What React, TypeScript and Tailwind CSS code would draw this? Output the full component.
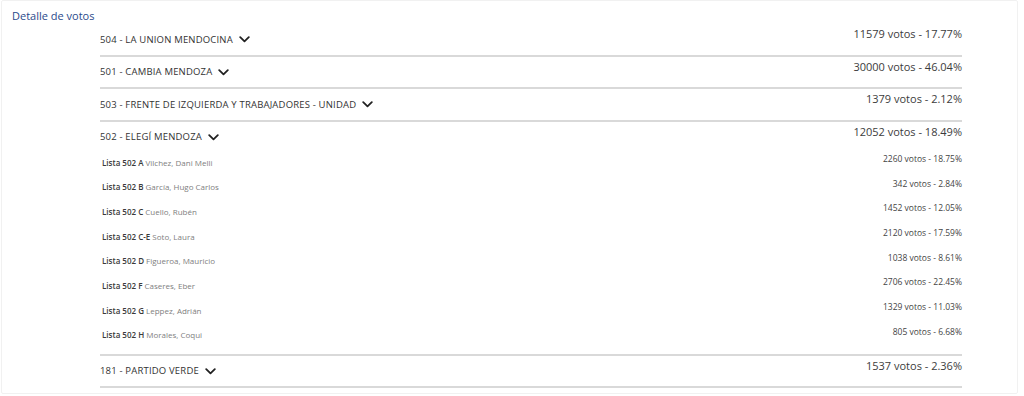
import React from 'react'

type Sub = { lista: string; name: string; votes: string }
type Party = { name: string; votes: string; subs?: Sub[] }

const PARTIES: Party[] = [
  { name: '504 - LA UNION MENDOCINA', votes: '11579 votos - 17.77%' },
  { name: '501 - CAMBIA MENDOZA', votes: '30000 votos - 46.04%' },
  { name: '503 - FRENTE DE IZQUIERDA Y TRABAJADORES - UNIDAD', votes: '1379 votos - 2.12%' },
  {
    name: '502 - ELEGÍ MENDOZA',
    votes: '12052 votos - 18.49%',
    subs: [
      { lista: 'Lista 502 A', name: 'Vilchez, Dani Melli', votes: '2260 votos - 18.75%' },
      { lista: 'Lista 502 B', name: 'García, Hugo Carlos', votes: '342 votos - 2.84%' },
      { lista: 'Lista 502 C', name: 'Cuello, Rubén', votes: '1452 votos - 12.05%' },
      { lista: 'Lista 502 C-E', name: 'Soto, Laura', votes: '2120 votos - 17.59%' },
      { lista: 'Lista 502 D', name: 'Figueroa, Mauricio', votes: '1038 votos - 8.61%' },
      { lista: 'Lista 502 F', name: 'Caseres, Eber', votes: '2706 votos - 22.45%' },
      { lista: 'Lista 502 G', name: 'Leppez, Adrián', votes: '1329 votos - 11.03%' },
      { lista: 'Lista 502 H', name: 'Morales, Coqui', votes: '805 votos - 6.68%' },
    ],
  },
  { name: '181 - PARTIDO VERDE', votes: '1537 votos - 2.36%' },
]

function Chevron() {
  return (
    <svg width="11" height="7" viewBox="0 0 11 7" fill="none" stroke="#222" strokeWidth="1.8" strokeLinecap="round" strokeLinejoin="round" className="ml-[6px]">
      <polyline points="1.2 1.2 5.5 5.4 9.8 1.2" />
    </svg>
  )
}

export default function App() {
  return (
    <div className="w-[1024px] h-[396px] bg-white font-['Open_Sans','Liberation_Sans',sans-serif] overflow-hidden">
      <div className="ml-[1px] w-[1017px] h-[394px] border border-[#f1f1f1] rounded-[2px] overflow-hidden">
        {/* Title */}
        <div className="pl-[10px] pt-[8px] h-[23px] text-[11px] leading-[14px] text-[#2b4a8b]">Detalle de votos</div>

        {/* Parties */}
        <div className="ml-[98px] w-[862px]">
          {PARTIES.map((p) => (
            <div key={p.name} className="border-b-2 border-[#d9d9d9]">
              <div className="flex justify-between h-[30.5px]">
                <div className="flex items-center pt-[1px] text-[9.5px] text-[#333] tracking-[0.18px]">
                  {p.name}
                  <Chevron />
                </div>
                <div className="pt-[3px] text-[11px] leading-[14px] text-[#3c3c3c]">{p.votes}</div>
              </div>
              {p.subs && (
                <div className="pb-[6px] -mt-[2px]">
                  {p.subs.map((s) => (
                    <div key={s.lista} className="flex justify-between h-[24.7px]">
                      <div className="pt-[6.5px] pl-[2px] text-[8px] leading-[12px]">
                        <span className="font-semibold text-[#3a3a3a]">{s.lista}</span>{' '}
                        <span className="text-[#808080]">{s.name}</span>
                      </div>
                      <div className="pt-[3px] text-[8.5px] leading-[12px] text-[#444]">{s.votes}</div>
                    </div>
                  ))}
                </div>
              )}
            </div>
          ))}
        </div>
      </div>
    </div>
  )
}
